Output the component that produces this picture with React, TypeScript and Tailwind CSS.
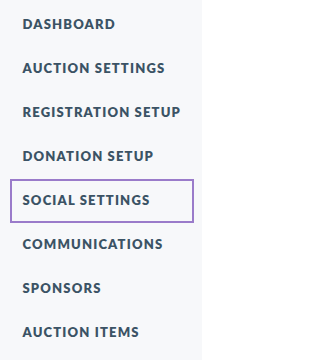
const items = [
  "DASHBOARD",
  "AUCTION SETTINGS",
  "REGISTRATION SETUP",
  "DONATION SETUP",
  "SOCIAL SETTINGS",
  "COMMUNICATIONS",
  "SPONSORS",
  "AUCTION ITEMS",
];

export default function App() {
  return (
    <div className="h-[360px] w-[202px] overflow-hidden bg-[#f7f8fa] pt-[3px]" style={{ fontFamily: "Lato, 'Open Sans', sans-serif" }}>
      <nav className="flex flex-col">
        {items.map((item) => (
          <a
            key={item}
            href="#"
            className={
              "mx-[10px] flex h-[44px] w-[184px] items-center border-[2.5px] pl-[10.5px] text-[13px] font-extrabold tracking-[0.09em] text-[#3b5365] " +
              (item === "SOCIAL SETTINGS" ? "border-[#9a7bca]" : "border-transparent")
            }
          >
            {item}
          </a>
        ))}
      </nav>
    </div>
  );
}
